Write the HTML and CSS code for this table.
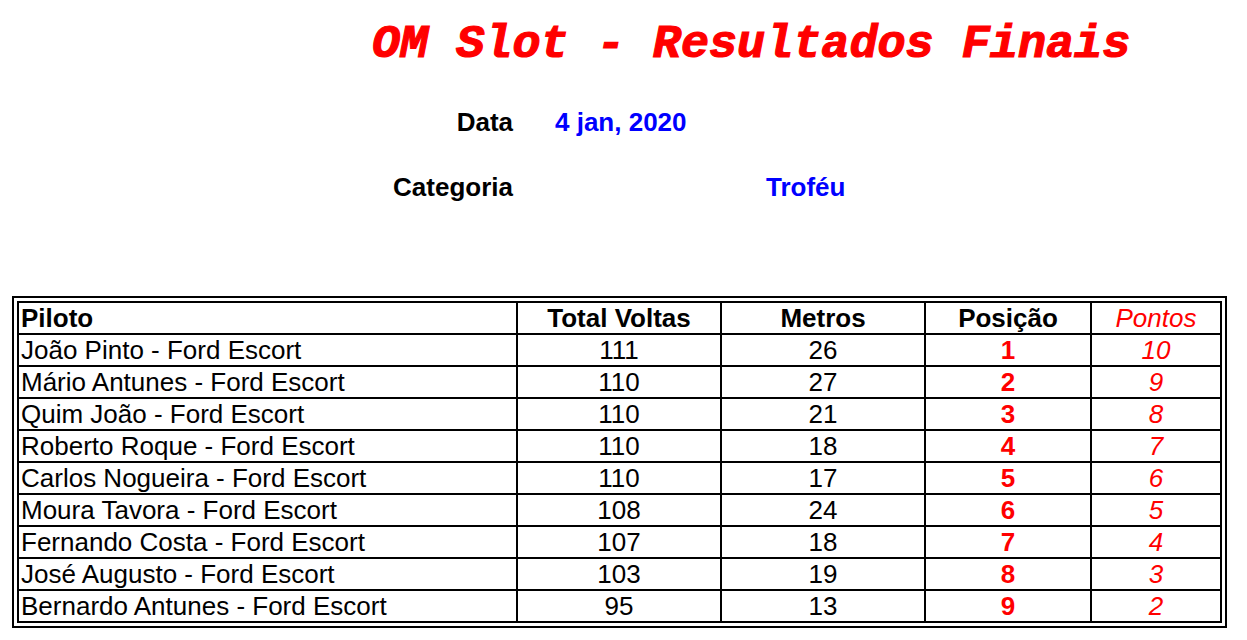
FILE: index.html
```html
<!DOCTYPE html>
<html lang="pt">
<head>
<meta charset="utf-8">
<title>OM Slot - Resultados Finais</title>
<link rel="stylesheet" href="styles.css">
</head>
<body>
<h1 class="title">OM Slot - Resultados Finais</h1>
<div class="info">
  <div class="label">Data</div>
  <div class="value value-date">4 jan, 2020</div>
  <div class="label">Categoria</div>
  <div class="value value-cat">Troféu</div>
</div>
<div class="frame">
<table class="results">
  <colgroup>
    <col class="c1"><col class="c2"><col class="c3"><col class="c4"><col class="c5">
  </colgroup>
  <thead>
    <tr>
      <th class="left">Piloto</th>
      <th>Total Voltas</th>
      <th>Metros</th>
      <th>Posição</th>
      <th class="pts-h">Pontos</th>
    </tr>
  </thead>
  <tbody>
    <tr><td class="left">João Pinto - Ford Escort</td><td>111</td><td>26</td><td class="pos">1</td><td class="pts">10</td></tr>
    <tr><td class="left">Mário Antunes - Ford Escort</td><td>110</td><td>27</td><td class="pos">2</td><td class="pts">9</td></tr>
    <tr><td class="left">Quim João - Ford Escort</td><td>110</td><td>21</td><td class="pos">3</td><td class="pts">8</td></tr>
    <tr><td class="left">Roberto Roque - Ford Escort</td><td>110</td><td>18</td><td class="pos">4</td><td class="pts">7</td></tr>
    <tr><td class="left">Carlos Nogueira - Ford Escort</td><td>110</td><td>17</td><td class="pos">5</td><td class="pts">6</td></tr>
    <tr><td class="left">Moura Tavora - Ford Escort</td><td>108</td><td>24</td><td class="pos">6</td><td class="pts">5</td></tr>
    <tr><td class="left">Fernando Costa - Ford Escort</td><td>107</td><td>18</td><td class="pos">7</td><td class="pts">4</td></tr>
    <tr><td class="left">José Augusto - Ford Escort</td><td>103</td><td>19</td><td class="pos">8</td><td class="pts">3</td></tr>
    <tr><td class="left">Bernardo Antunes - Ford Escort</td><td>95</td><td>13</td><td class="pos">9</td><td class="pts">2</td></tr>
  </tbody>
</table>
</div>
</body>
</html>
```
FILE: styles.css
```css
html, body {
  margin: 0;
  padding: 0;
  background: #ffffff;
}
body {
  font-family: "Liberation Sans", Arial, sans-serif;
  color: #000;
}
.title {
  margin: 0;
  padding: 17px 0 0 372px;
  font-family: "Liberation Mono", "Courier New", monospace;
  font-weight: bold;
  font-style: italic;
  font-size: 46.8px;
  line-height: 56px;
  color: #ff0000;
  -webkit-text-stroke: 1.2px #ff0000;
}
.info {
  display: grid;
  grid-template-columns: 513px 1fr;
  grid-auto-rows: 65px;
  margin-top: 35px;
  font-size: 26px;
  font-weight: bold;
  line-height: 29px;
}
.label {
  text-align: right;
}
.value {
  color: #0000ff;
}
.value-date {
  padding-left: 42px;
}
.value-cat {
  padding-left: 253px;
}
.frame {
  margin: 58px 0 0 12px;
  width: 1205px;
  border: 2px solid #000;
  padding: 3px;
}
.results {
  width: 100%;
  border-collapse: collapse;
  table-layout: fixed;
  border: 2px solid #000;
  font-size: 26px;
}
.c1 { width: 499px; }
.c2 { width: 204px; }
.c3 { width: 204px; }
.c4 { width: 166px; }
.c5 { width: auto; }
.results th, .results td {
  border: 2px solid #000;
  height: 30px;
  padding: 0;
  line-height: 30px;
  text-align: center;
  white-space: nowrap;
  overflow: hidden;
}
.results th {
  font-size: 26px;
  font-weight: bold;
}
.results .left {
  text-align: left;
  padding-left: 2px;
}
.pos {
  color: #ff0000;
  font-weight: bold;
}
.pts, .results .pts-h {
  color: #ff0000;
  font-style: italic;
  font-weight: normal;
}
```
